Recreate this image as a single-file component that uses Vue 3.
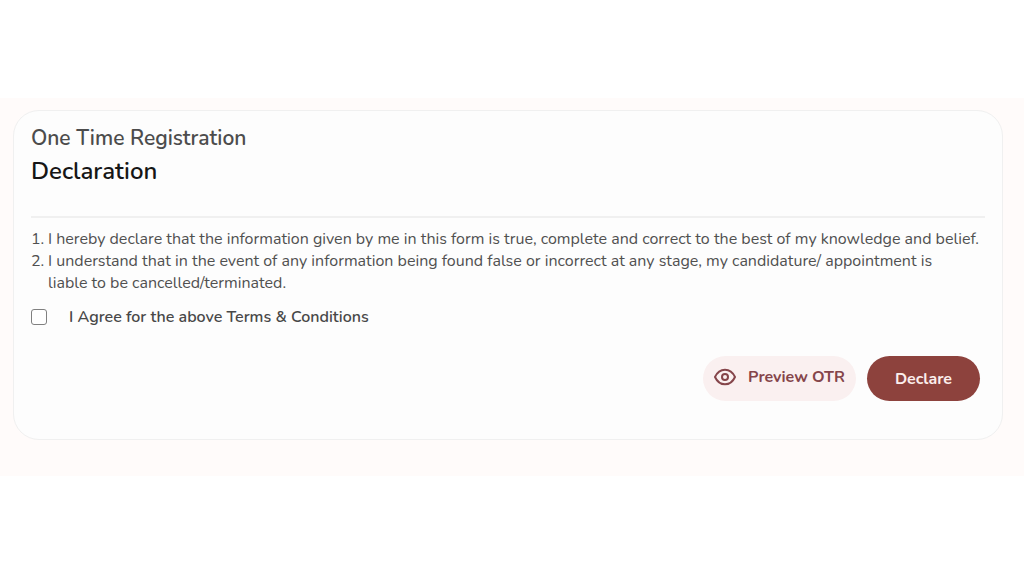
<script setup>
import { ref } from 'vue'

const agreed = ref(false)

const clauses = [
  'I hereby declare that the information given by me in this form is true, complete and correct to the best of my knowledge and belief.',
  'I understand that in the event of any information being found false or incorrect at any stage, my candidature/ appointment is\nliable to be cancelled/terminated.',
]
</script>

<template>
  <main class="page">
    <section class="declaration-card">
      <header class="card-head">
        <h2>One Time Registration</h2>
        <h1>Declaration</h1>
      </header>

      <ol class="clauses">
        <li v-for="(clause, index) in clauses" :key="index">
          <span class="clause-number">{{ index + 1 }}.</span>
          <span class="clause-text">{{ clause }}</span>
        </li>
      </ol>

      <div class="agree">
        <input id="agree" v-model="agreed" type="checkbox" />
        <label for="agree">I Agree for the above Terms &amp; Conditions</label>
      </div>

      <div class="actions">
        <button class="btn btn-preview" type="button">
          <svg viewBox="0 0 24 20" width="24" height="20" fill="none" stroke="currentColor" stroke-width="2" aria-hidden="true">
            <path d="M2 10C4.200 5.200 7.700 2.700 12 2.700S19.800 5.200 22 10C19.800 14.800 16.300 17.300 12 17.300S4.200 14.800 2 10Z" stroke-linejoin="round" />
            <circle cx="12" cy="10" r="3" />
          </svg>
          <span>Preview OTR</span>
        </button>
        <button class="btn btn-declare" type="button">Declare</button>
      </div>
    </section>
  </main>
</template>

<style>
body {
  background: #fff;
}
</style>

<style scoped>
.page {
  margin-top: 98px;
  padding: 12px 21px 36px 13px;
  background: #fffbfa;
  color: #505050;
  font-family: Nunito, 'Open Sans', sans-serif;
  font-size: 16px;
  line-height: 22px;
}

.declaration-card {
  padding: 12px 17px 38px;
  border: 1px solid #f0f0f0;
  border-radius: 26px;
  background: #fdfdfd;
}

.card-head {
  padding-bottom: 26px;
  border-bottom: 2px solid #f0f0f0;
}

.card-head h1,
.card-head h2 {
  margin: 0;
  font-weight: 600;
}

.card-head h2 {
  color: #4c4c4c;
  font-size: 21px;
  line-height: 30px;
}

.card-head h1 {
  color: #161616;
  font-size: 24px;
  line-height: 37px;
}

.clauses {
  margin: 0;
  padding: 10px 0 0;
  list-style: none;
}

.clauses li {
  display: flex;
}

.clause-number {
  flex: 0 0 17px;
}

.clause-text {
  white-space: pre-line;
}

.agree {
  display: flex;
  align-items: center;
  gap: 22px;
  margin-top: 12px;
  color: #484848;
  font-weight: 600;
}

.agree input {
  appearance: none;
  width: 16px;
  height: 16px;
  margin: 0;
  border: 1px solid #808080;
  border-radius: 3px;
  background: #fff;
}

.agree input:checked {
  background: #8d423d;
  box-shadow: inset 0 0 0 3px #fff;
}

.actions {
  display: flex;
  justify-content: flex-end;
  gap: 11px;
  margin-top: 28px;
  padding-right: 5px;
}

.btn {
  display: inline-flex;
  align-items: center;
  justify-content: center;
  height: 45px;
  border: 0;
  border-radius: 23px;
  font: inherit;
  font-weight: 700;
  cursor: pointer;
}

.btn-preview {
  gap: 11px;
  padding: 0 11px 3px 10px;
  background: #faf0f0;
  color: #85454a;
}

.btn-declare {
  padding: 0 28px;
  background: #8d423d;
  color: #fbeeec;
}
</style>
